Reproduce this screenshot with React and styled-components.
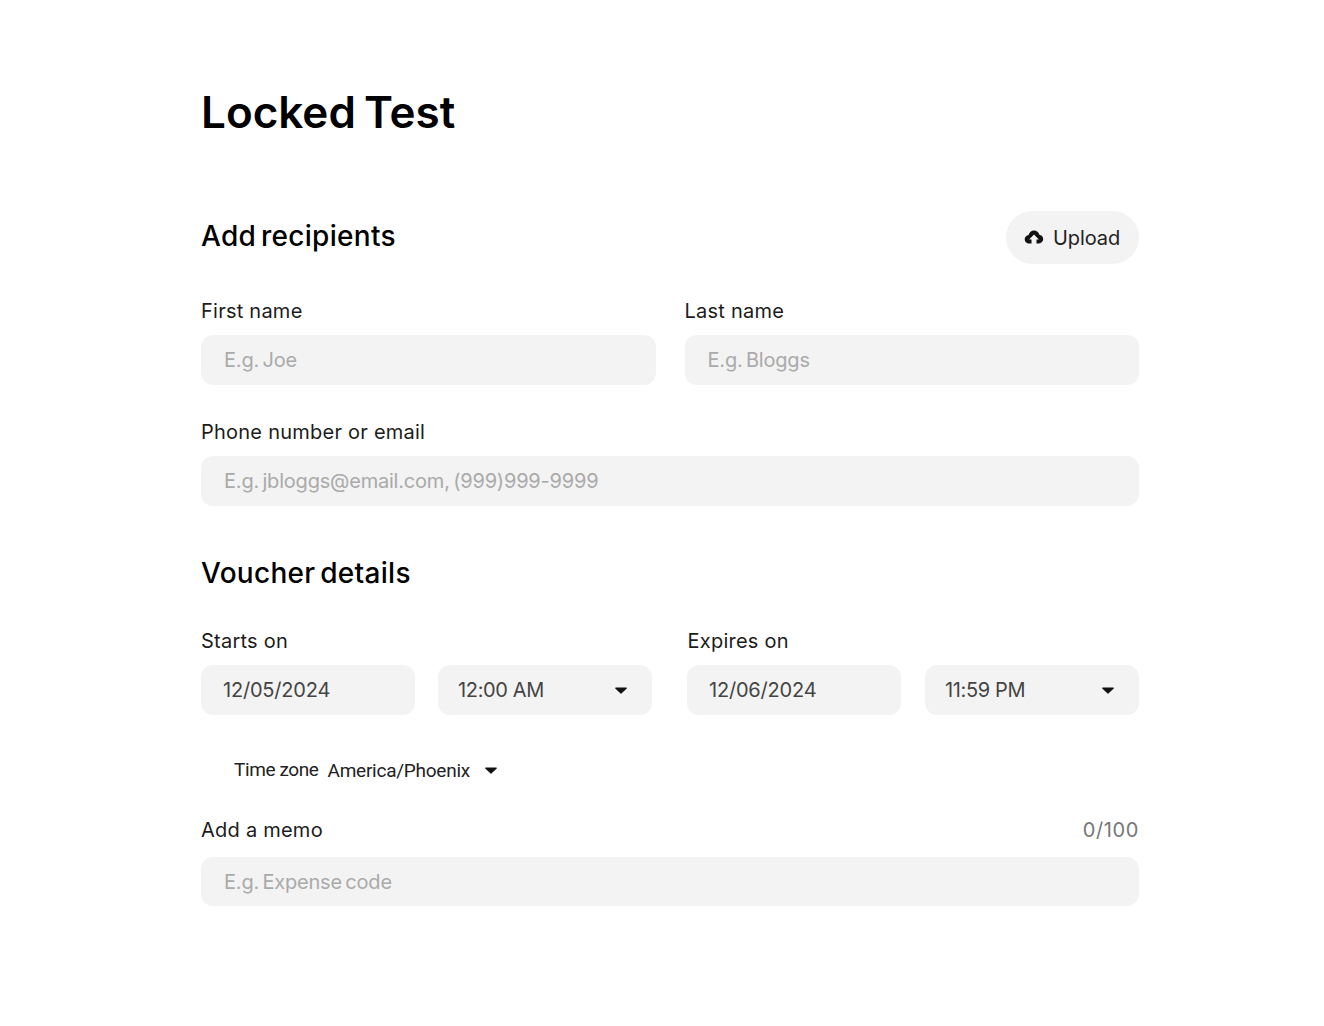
import React from "react";
import styled, { createGlobalStyle } from "styled-components";

const Global = createGlobalStyle`
  html, body { margin: 0; padding: 0; background: #fff; }
  body { font-family: "Inter", "Noto Sans", sans-serif; color: #000; }
`;

const Page = styled.main`
  box-sizing: border-box;
  width: 1324px;
  height: 1026px;
  padding: 85px 185px 0 201px;
`;
const Title = styled.h1`
  margin: 0;
  height: 55px;
  font-size: 44px;
  line-height: 54px;
  font-weight: 600;
  letter-spacing: 0;
  word-spacing: -3px;
  color: #000;
`;
const SectionHead = styled.div`
  display: flex;
  justify-content: space-between;
  align-items: center;
  margin-top: ${p => p.$top}px;
  height: ${p => p.$h}px;
`;
const Heading = styled.h2`
  margin: 0;
  font-size: 28px;
  line-height: 36px;
  font-weight: 500;
  letter-spacing: 0.3px;
  word-spacing: -3px;
  color: #000;
  position: relative;
  top: -2px;
`;
const UploadButton = styled.button`
  display: flex;
  align-items: center;
  gap: 9px;
  height: 53px;
  width: 133px;
  box-sizing: border-box;
  padding: 0 0 0 18px;
  border: 0;
  border-radius: 27px;
  background: #f3f3f3;
  font: 400 20px/24px "Inter", sans-serif;
  letter-spacing: -0.1px;
  color: #222;
`;
const Row = styled.div`
  display: grid;
  grid-template-columns: 1fr 1fr;
  column-gap: 29px;
  margin-top: ${p => p.$top || 0}px;
`;
const Field = styled.div`
  display: flex;
  flex-direction: column;
  margin-top: ${p => p.$top || 0}px;
`;
const LabelRow = styled.div`
  display: flex;
  justify-content: space-between;
  height: 24px;
  align-items: center;
`;
const Label = styled.label`
  font-size: 20px;
  line-height: 24px;
  font-weight: 400;
  letter-spacing: 0.24px;
  color: #1c1c1c;
  position: relative;
  left: ${p => p.$shift || 0}px;
`;
const Counter = styled.span`
  font-size: 20px;
  line-height: 24px;
  color: #777;
  letter-spacing: 0.6px;
`;
const Input = styled.input`
  box-sizing: border-box;
  width: 100%;
  height: ${p => p.$h || 50}px;
  margin-top: ${p => p.$gap || 12}px;
  padding: 0 23px;
  border: 0;
  border-radius: 12px;
  outline: 0;
  background: #f3f3f3;
  font: 400 20px/24px "Inter", sans-serif;
  letter-spacing: -0.2px;
  word-spacing: -2px;
  color: #444;
  &::placeholder { color: #aaa; opacity: 1; }
`;
const DateGrid = styled.div`
  display: flex;
  justify-content: space-between;
  margin-top: 12px;
`;
const DatePair = styled.div`
  display: flex;
  justify-content: space-between;
  width: ${p => p.$w}px;
`;
const DateInput = styled(Input)`
  margin-top: 0;
  width: 214px;
  padding: 0 22px;
`;
const TimeSelect = styled.div`
  box-sizing: border-box;
  width: 214px;
  height: 50px;
  display: flex;
  align-items: center;
  justify-content: space-between;
  padding: 0 25px 0 20px;
  border-radius: 12px;
  background: #f3f3f3;
  font-size: 20px;
  letter-spacing: -0.35px;
  color: #444;
`;
const Caret = styled.svg`
  width: 12px;
  height: 7px;
  flex: none;
  display: block;
`;
const ZoneRow = styled.div`
  display: flex;
  align-items: center;
  margin: 42px 0 0 33px;
  height: 26px;
  font-family: "Roboto", sans-serif;
  font-size: 19px;
  color: #222;
`;
const ZoneLabel = styled.span`
  letter-spacing: -0.4px;
  position: relative;
  top: -1px;
  margin-right: 9px;
`;
const ZoneValue = styled.span`
  letter-spacing: -0.25px;
  margin-right: 15px;
`;

const CaretIcon = () => (
  <Caret viewBox="0 0 12 7" aria-hidden="true">
    <path d="M0.6 0.6h10.8a.5.5 0 0 1 .35.85L6.4 6.5a.6.6 0 0 1-.8 0L.25 1.45A.5.5 0 0 1 .6.6z" fill="#111" />
  </Caret>
);

const CloudIcon = () => (
  <svg width="20" height="15" viewBox="0 0 20 15" aria-hidden="true">
    <path
      fill="#111"
      d="M10 0.5c2.6 0 4.8 1.8 5.3 4.3 2.2.2 3.9 2 3.9 4.3 0 2.4-1.9 4.4-4.4 4.4h-2.3V9.6h2.4L10 4.4 5.1 9.6h2.4v3.9H5c-2.4 0-4.3-1.8-4.3-4.2 0-2.2 1.7-4.1 3.9-4.3C5.2 2.4 7.4.5 10 .5z"
    />
  </svg>
);

export default function App() {
  return (
    <>
      <Global />
      <Page>
        <Title>Locked Test</Title>
        <SectionHead $top={71} $h={53}>
          <Heading>Add recipients</Heading>
          <UploadButton type="button"><CloudIcon />Upload</UploadButton>
        </SectionHead>
        <Row $top={35}>
          <Field>
            <LabelRow><Label>First name</Label></LabelRow>
            <Input placeholder="E.g. Joe" />
          </Field>
          <Field>
            <LabelRow><Label>Last name</Label></LabelRow>
            <Input placeholder="E.g. Bloggs" />
          </Field>
        </Row>
        <Field $top={35}>
          <LabelRow><Label>Phone number or email</Label></LabelRow>
          <Input placeholder="E.g. jbloggs@email.com, (999)999-9999" />
        </Field>
        <SectionHead $top={51} $h={36}>
          <Heading>Voucher details</Heading>
        </SectionHead>
        <Row $top={36}>
          <LabelRow><Label>Starts on</Label></LabelRow>
          <LabelRow><Label $shift={3}>Expires on</Label></LabelRow>
        </Row>
        <DateGrid>
          <DatePair $w={451}>
            <DateInput defaultValue="12/05/2024" />
            <TimeSelect>12:00 AM<CaretIcon /></TimeSelect>
          </DatePair>
          <DatePair $w={452}>
            <DateInput defaultValue="12/06/2024" />
            <TimeSelect>11:59 PM<CaretIcon /></TimeSelect>
          </DatePair>
        </DateGrid>
        <ZoneRow>
          <ZoneLabel>Time zone</ZoneLabel>
          <ZoneValue>America/Phoenix</ZoneValue>
          <CaretIcon />
        </ZoneRow>
        <Field $top={35}>
          <LabelRow><Label>Add a memo</Label><Counter>0/100</Counter></LabelRow>
          <Input $h={49} $gap={15} placeholder="E.g. Expense code" />
        </Field>
      </Page>
    </>
  );
}
